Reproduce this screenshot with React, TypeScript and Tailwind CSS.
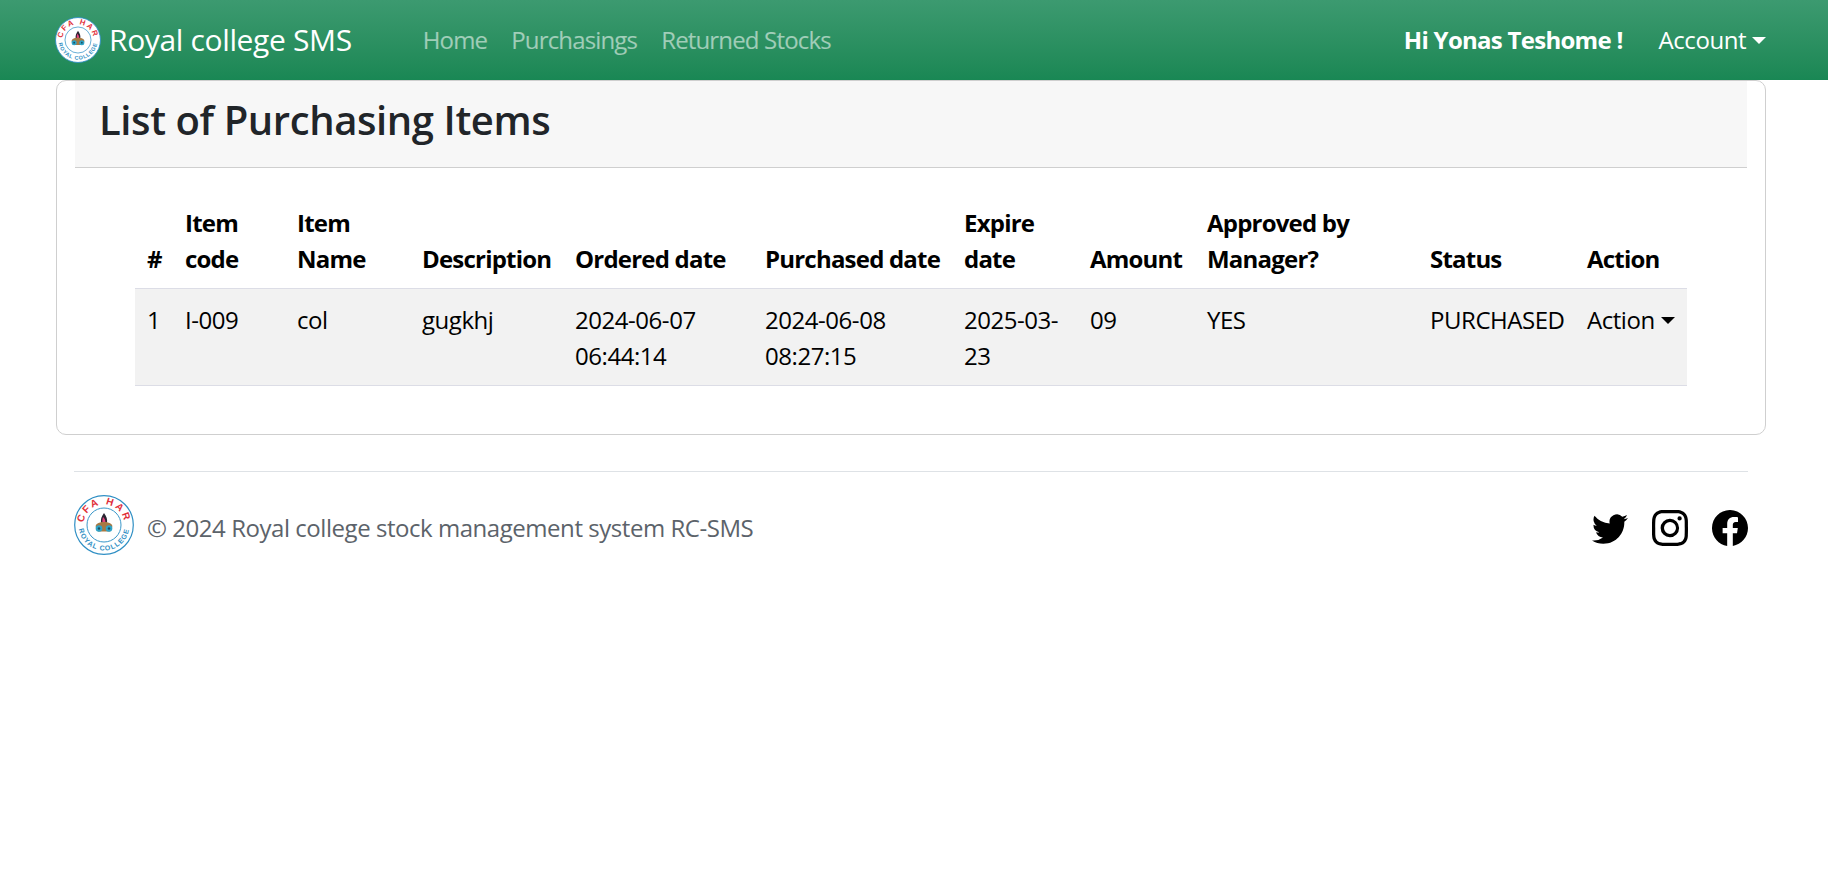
import { BsTwitter, BsInstagram, BsFacebook } from "react-icons/bs";

const fontStack = "font-['Open_Sans','Noto_Sans',sans-serif]";

function Logo({ size, id }: { size: number; id: string }) {
  return (
    <svg width={size} height={size} viewBox="0 0 60 60" className="shrink-0">
      <circle cx="30" cy="30" r="29.3" fill="#fff" stroke="#2f8fc4" strokeWidth="1.2" />
      <circle cx="30" cy="30" r="17" fill="#fff" stroke="#3a97c9" strokeWidth="1" />
      <defs>
        <path id={`${id}-top`} d="M 9.5 30 A 20.5 20.5 0 0 1 50.5 30" />
        <path id={`${id}-bot`} d="M 4.500 30 A 25.500 25.500 0 0 0 55.500 30" />
      </defs>
      <text fontSize="10" fontWeight="700" fill="#e0303a" fontFamily="Liberation Sans, sans-serif" letterSpacing="2.2">
        <textPath href={`#${id}-top`} startOffset="50%" textAnchor="middle">
          CFA HAR
        </textPath>
      </text>
      <text fontSize="7" fontWeight="700" fill="#2f8fc4" fontFamily="Liberation Sans, sans-serif" letterSpacing="0.9">
        <textPath href={`#${id}-bot`} startOffset="50%" textAnchor="middle">
          ROYAL COLLEGE
        </textPath>
      </text>
      <path d="M30 18c2.500 3.500 3.500 6 3 10h-6c-.5-4 .5-6.500 3-10z" fill="#2a2430" />
      <path d="M29 22c1.800 1.500 2.800 3.500 2.200 6h-2.600c-.4-2-.2-4 .4-6z" fill="#e8417c" />
      <path d="M22 33c-1.500-3.500 2-6 8-6s9.500 2.500 8 6l-2 3.500h-12z" fill="#a87942" />
      <circle cx="25" cy="33.500" r="3.300" fill="#2fa3c7" />
      <circle cx="35" cy="33.500" r="3.300" fill="#2fa3c7" />
      <circle cx="25" cy="33.500" r="1.200" fill="#1c4f5e" />
      <circle cx="35" cy="33.500" r="1.200" fill="#1c4f5e" />
    </svg>
  );
}

const columns = [
  { label: "#", width: "w-[38px]" },
  { label: "Item code", width: "w-[112px]" },
  { label: "Item Name", width: "w-[125px]" },
  { label: "Description", width: "w-[153px]" },
  { label: "Ordered date", width: "w-[190px]" },
  { label: "Purchased date", width: "w-[199px] whitespace-nowrap" },
  { label: "Expire date", width: "w-[126px]" },
  { label: "Amount", width: "w-[117px]" },
  { label: "Approved by Manager?", width: "w-[223px]" },
  { label: "Status", width: "w-[157px]" },
  { label: "Action", width: "w-[112px]" },
];

const cells = ["1", "I-009", "col", "gugkhj", "2024-06-07 06:44:14", "2024-06-08 08:27:15", "2025-03-23", "09", "YES", "PURCHASED"];

export default function App() {
  return (
    <div className={`min-h-[886px] bg-white text-[24px] leading-[36px] tracking-[-0.019em] text-[#212529] ${fontStack}`}>
      <nav className="flex h-[80px] items-center justify-between bg-gradient-to-b from-[#3c9a70] to-[#198754] pl-[55px] pr-[62px]">
        <div className="flex items-center">
          <a className="flex items-center gap-[8px] text-[30px] tracking-[-0.012em] text-white">
            <Logo size={46} id="nav" />
            <span>Royal college SMS</span>
          </a>
          <ul className="ml-[71px] flex gap-[24px] tracking-[-0.035em] text-white/55">
            <li>Home</li>
            <li>Purchasings</li>
            <li>Returned Stocks</li>
          </ul>
        </div>
        <div className="flex items-center text-white">
          <span className="font-bold tracking-[-0.03em]">Hi Yonas Teshome !</span>
          <span className="ml-[36px] flex items-center">
            Account
            <span className="ml-[6px] h-0 w-0 border-x-[7px] border-t-[7px] border-x-transparent border-t-white" />
          </span>
        </div>
      </nav>

      <main className="pl-[56px] pr-[62px]">
        <section className="rounded-[10px] border border-[#cfcfcf] px-[18px] pb-[48px]">
          <header className="h-[87px] border-b border-[#cfcfcf] bg-[#f7f7f7] px-[24px] pt-[15px]">
            <h1 className="text-[40px] font-semibold leading-[48px] tracking-[-0.01em]">List of Purchasing Items</h1>
          </header>
          <div className="px-[60px] pt-[24px]">
            <table className="w-full table-fixed border-collapse text-black">
              <thead>
                <tr className="border-b border-[#dcdde6]">
                  {columns.map((c) => (
                    <th key={c.label} className={`${c.width} px-[12px] pb-[11px] pt-[13px] text-left align-bottom font-bold tracking-[-0.033em]`}>
                      {c.label}
                    </th>
                  ))}
                </tr>
              </thead>
              <tbody>
                <tr className="border-b border-[#dcdde6] bg-[#f2f2f2]">
                  {cells.map((c, i) => (
                    <td key={i} className="px-[12px] pb-[11px] pt-[13px] align-top">
                      {c}
                    </td>
                  ))}
                  <td className="px-[12px] pb-[11px] pt-[13px] align-top">
                    <span className="flex items-center whitespace-nowrap">
                      Action
                      <span className="ml-[6px] h-0 w-0 border-x-[7px] border-t-[7px] border-x-transparent border-t-black" />
                    </span>
                  </td>
                </tr>
              </tbody>
            </table>
          </div>
        </section>

        <footer className="mx-[18px] mt-[36px] flex items-start justify-between border-t border-[#dee2e6] pt-[23px]">
          <div className="flex items-start gap-[13px] text-[#5c636a]">
            <Logo size={60} id="foot" />
            <span className="mt-[15px]">© 2024 Royal college stock management system RC-SMS</span>
          </div>
          <div className="mt-[15px] flex items-center gap-[24px] text-black">
            <BsTwitter size={36} />
            <BsInstagram size={36} />
            <BsFacebook size={36} />
          </div>
        </footer>
      </main>
    </div>
  );
}
